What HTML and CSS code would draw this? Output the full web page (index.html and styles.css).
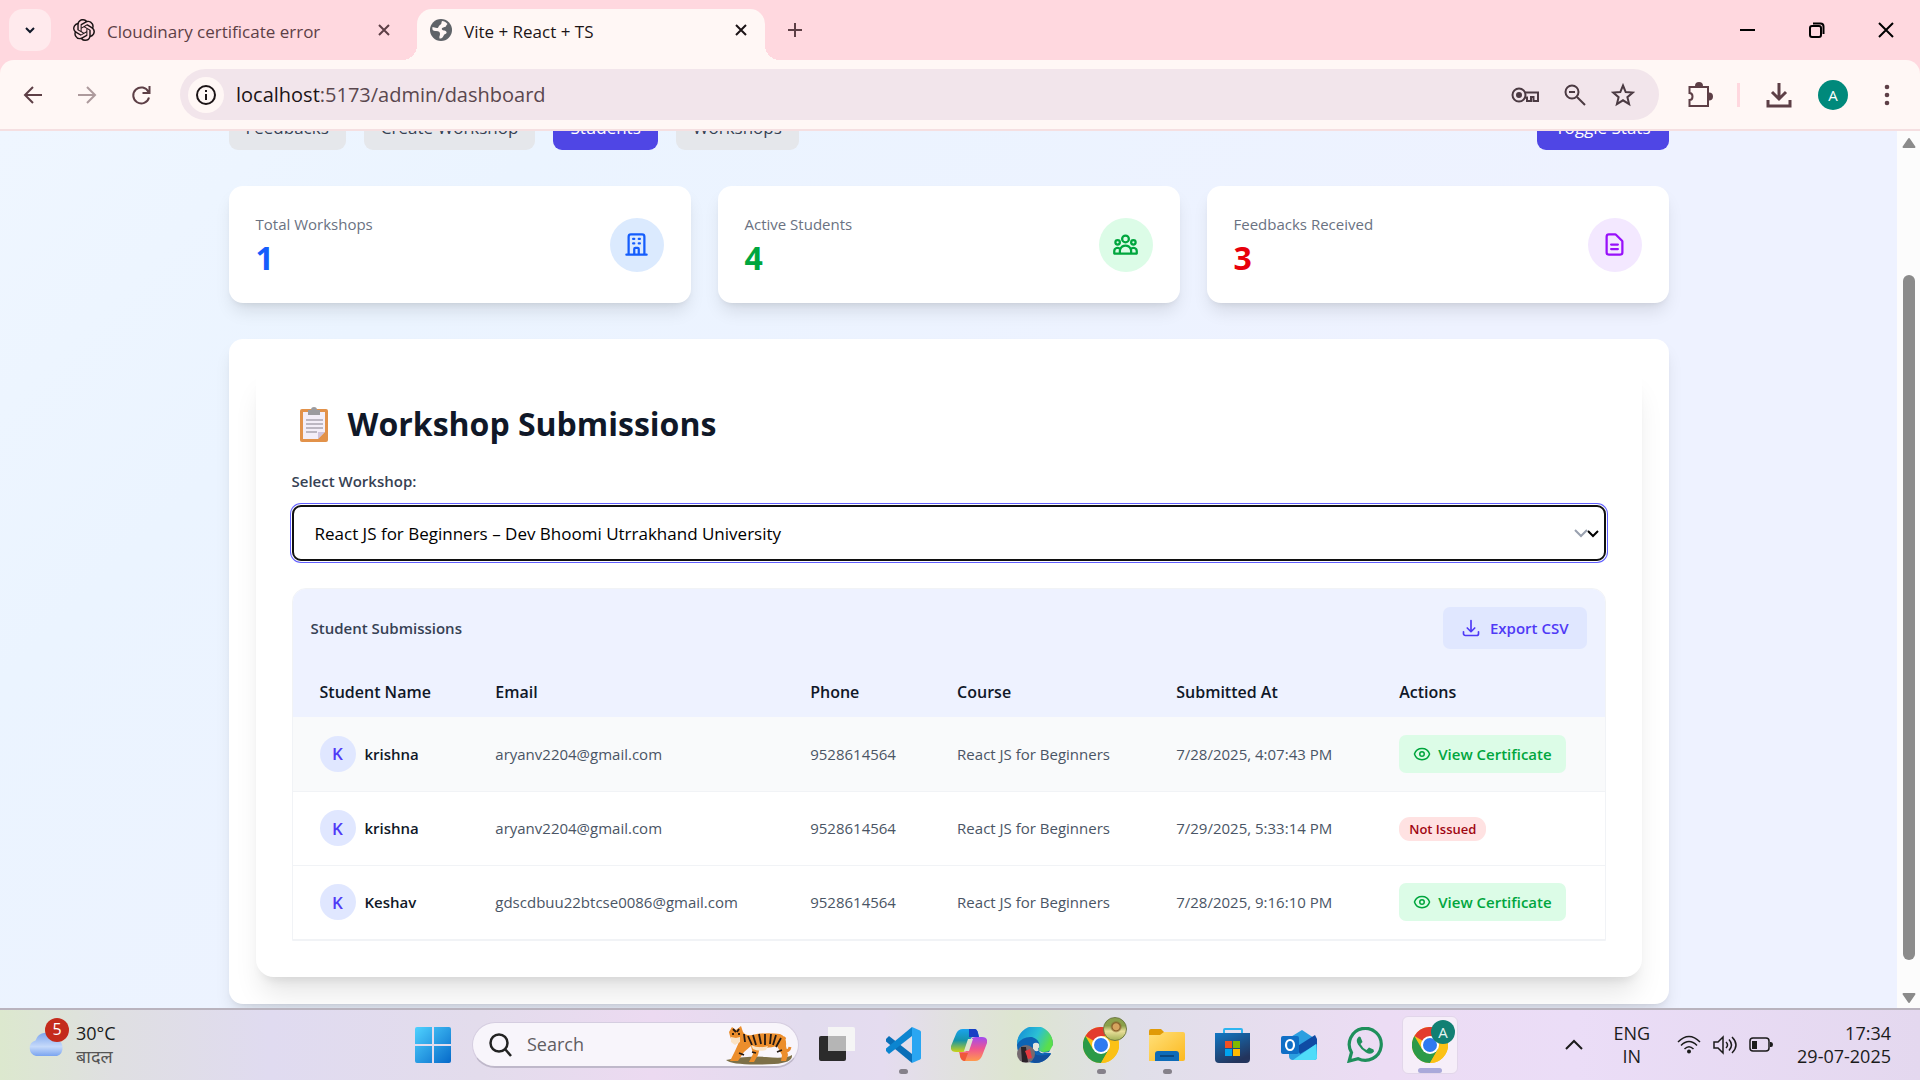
FILE: index.html
```html
<!DOCTYPE html>
<html lang="en">
<head>
<meta charset="utf-8">
<meta name="viewport" content="width=device-width, initial-scale=1">
<title>Vite + React + TS</title>
<link rel="stylesheet" href="styles.css">
</head>
<body>
<svg class="sprite" aria-hidden="true">
  <symbol id="i-eye" viewBox="0 0 24 24"><path d="M2.04 12.32a1 1 0 0 1 0-.64C3.42 7.51 7.36 4.5 12 4.5s8.57 3.01 9.96 7.18c.07.21.07.43 0 .64C20.58 16.49 16.64 19.5 12 19.5s-8.57-3.01-9.96-7.18z"/><circle cx="12" cy="12" r="3"/></symbol>
  <symbol id="i-close" viewBox="0 0 18 18"><path d="M4 4l10 10M14 4L4 14"/></symbol>
  <symbol id="i-chrome" viewBox="0 0 36 36">
    <circle cx="18" cy="18" r="18" fill="#fbc116"/>
    <path d="M18 18L2.400 9A18 18 0 0 1 33.600 9z" fill="#e33b2e"/>
    <path d="M2.400 9A18 18 0 0 0 18 36L25.800 22.500 18 18 10.200 22.500z" fill="#2b9a48"/>
    <path d="M18 9H33.600A18 18 0 0 1 18 36L25.800 22.500z" fill="#fbc116"/>
    <circle cx="18" cy="18" r="9" fill="#fff"/><circle cx="18" cy="18" r="7" fill="#2f7af0"/>
  </symbol>
</svg>

<header class="browser">
  <div class="tabstrip">
    <button class="tab-search" aria-label="Search tabs"><svg width="18" height="18" viewBox="0 0 18 18"><path d="M5 7l4 4 4-4"/></svg></button>
    <div class="tab">
      <svg class="favicon" viewBox="0 0 24 24"><path fill="#1c1416" d="M22.2819 9.8211a5.9847 5.9847 0 0 0-.5157-4.9108 6.0462 6.0462 0 0 0-6.5098-2.9A6.0651 6.0651 0 0 0 4.9807 4.1818a5.9847 5.9847 0 0 0-3.9977 2.9 6.0462 6.0462 0 0 0 .7427 7.0966 5.98 5.98 0 0 0 .511 4.9107 6.051 6.051 0 0 0 6.5146 2.9001A5.9847 5.9847 0 0 0 13.2599 24a6.0557 6.0557 0 0 0 5.7718-4.2058 5.9894 5.9894 0 0 0 3.9977-2.9001 6.0557 6.0557 0 0 0-.7475-7.0729zm-9.022 12.6081a4.4755 4.4755 0 0 1-2.8764-1.0408l.1419-.0804 4.7783-2.7582a.7948.7948 0 0 0 .3927-.6813v-6.7369l2.02 1.1686a.071.071 0 0 1 .038.052v5.5826a4.504 4.504 0 0 1-4.4945 4.4944zm-9.6607-4.1254a4.4708 4.4708 0 0 1-.5346-3.0137l.142.0852 4.783 2.7582a.7712.7712 0 0 0 .7806 0l5.8428-3.3685v2.3324a.0804.0804 0 0 1-.0332.0615L9.74 19.9502a4.4992 4.4992 0 0 1-6.1408-1.6464zM2.3408 7.8956a4.485 4.485 0 0 1 2.3655-1.9728V11.6a.7664.7664 0 0 0 .3879.6765l5.8144 3.3543-2.0201 1.1685a.0757.0757 0 0 1-.071 0l-4.8303-2.7865A4.504 4.504 0 0 1 2.3408 7.872zm16.5963 3.8558L13.1038 8.364 15.1192 7.2a.0757.0757 0 0 1 .071 0l4.8303 2.7913a4.4944 4.4944 0 0 1-.6765 8.1042v-5.6772a.79.79 0 0 0-.407-.667zm2.0107-3.0231l-.142-.0852-4.7735-2.7818a.7759.7759 0 0 0-.7854 0L9.409 9.2297V6.8974a.0662.0662 0 0 1 .0284-.0615l4.8303-2.7866a4.4992 4.4992 0 0 1 6.6802 4.66zM8.3065 12.863l-2.02-1.1638a.0804.0804 0 0 1-.038-.0567V6.0742a4.4992 4.4992 0 0 1 7.3757-3.4537l-.142.0805L8.704 5.459a.7948.7948 0 0 0-.3927.6813zm1.0976-2.3654l2.602-1.4998 2.6069 1.4998v2.9994l-2.5974 1.4997-2.6067-1.4997Z"/></svg>
      <span class="tab-title">Cloudinary certificate error</span>
      <button class="tab-close" aria-label="Close tab"><svg width="18" height="18"><use href="#i-close"/></svg></button>
    </div>
    <div class="tab tab-active">
      <svg class="favicon" viewBox="0 0 22 22"><circle cx="11" cy="11" r="11" fill="#5f6368"/><path d="M12 2c-1 2 0 3-2 4s-1 3-3 3-3-1-4.500-1C2 11 3 12 6 12s4 1 4 3-1 2-.500 4.500C12 20 13 18 14 16c1-1.500 3-1 2.500-3S13 12 12 10.500 14 8 15 8s1-2 2.500-3C16 3 14 2 12 2z" fill="#fff7f5"/></svg>
      <span class="tab-title">Vite + React + TS</span>
      <button class="tab-close" aria-label="Close tab"><svg width="18" height="18"><use href="#i-close"/></svg></button>
    </div>
    <button class="new-tab" aria-label="New tab"><svg width="20" height="20" viewBox="0 0 20 20"><path d="M10 3v14M3 10h14"/></svg></button>
    <div class="window-controls">
      <button aria-label="Minimize"><svg width="16" height="16" viewBox="0 0 16 16"><path d="M0 8h15"/></svg></button>
      <button aria-label="Restore"><svg width="16" height="16" viewBox="0 0 16 16"><rect x="1" y="4" width="11" height="11" rx="2"/><path d="M4 1.500h7.500a3 3 0 0 1 3 3V12"/></svg></button>
      <button aria-label="Close"><svg width="16" height="16" viewBox="0 0 16 16"><path d="M1 1l14 14M15 1L1 15"/></svg></button>
    </div>
  </div>
  <div class="toolbar">
    <button class="tool" aria-label="Back"><svg width="24" height="24" viewBox="0 0 24 24"><path d="M21 12H4M12 4l-8 8 8 8"/></svg></button>
    <button class="tool tool-off" aria-label="Forward"><svg width="24" height="24" viewBox="0 0 24 24"><path d="M3 12h17M12 4l8 8-8 8"/></svg></button>
    <button class="tool" aria-label="Reload"><svg width="24" height="24" viewBox="0 0 24 24"><path d="M20 14.500A8 8 0 1 1 19.500 9M20.500 3v7h-7"/></svg></button>
    <div class="omnibox">
      <button class="site-info" aria-label="Site information"><svg width="24" height="24" viewBox="0 0 24 24"><circle cx="12" cy="12" r="9"/><path d="M12 11v6M12 7v2"/></svg></button>
      <div class="url">localhost<span>:5173/admin/dashboard</span></div>
      <button aria-label="Passwords"><svg width="28" height="24" viewBox="0 0 28 24"><circle cx="8" cy="12" r="6.500"/><circle cx="8" cy="12" r="2" fill="#4b3a42"/><path d="M14 9.500H27V18h-4.500v-4H20v4h-4v-3.500h-2"/></svg></button>
      <button aria-label="Zoom"><svg width="24" height="24" viewBox="0 0 24 24"><circle cx="9" cy="9" r="6.500"/><path d="M6 9h6M14 14l8 8"/></svg></button>
      <button aria-label="Bookmark"><svg width="24" height="24" viewBox="0 0 24 24"><path d="M12 2.500l2.700 6.600 7.100.500-5.400 4.600 1.700 6.900-6.100-3.800-6.100 3.800 1.700-6.900L2.200 9.600l7.100-.500z"/></svg></button>
    </div>
    <button class="tool" aria-label="Extensions"><svg width="26" height="26" viewBox="0 0 26 26"><path d="M2.500 5h18.500v19H2.500v-6c4 0 4-7 0-7z"/><path d="M9 4a3 3 0 0 1 6 0zM22 11.500a3 3 0 0 1 0 6z" fill="#5d3f46"/></svg></button>
    <i class="tool-divider"></i>
    <button class="tool tool-bold" aria-label="Downloads"><svg width="26" height="26" viewBox="0 0 26 26"><path d="M13 1v15M6 10l7 7 7-7M2 18v6h22v-6"/></svg></button>
    <button class="tool" aria-label="Profile"><span class="profile">A</span></button>
    <button class="tool" aria-label="Menu"><svg width="24" height="24" viewBox="0 0 24 24" class="dots"><circle cx="12" cy="4" r="2.300"/><circle cx="12" cy="12" r="2.300"/><circle cx="12" cy="20" r="2.300"/></svg></button>
  </div>
</header>

<div class="viewport">
  <main class="page">
    <div class="content">
      <nav class="actions">
        <button class="pill">Feedbacks</button>
        <button class="pill">Create Workshop</button>
        <button class="pill pill-on">Students</button>
        <button class="pill">Workshops</button>
        <button class="pill pill-on pill-end">Toggle Stats</button>
      </nav>
      <section class="stats">
        <article class="stat stat-blue">
          <div><p class="stat-label">Total Workshops</p><p class="stat-value">1</p></div>
          <span class="stat-icon"><svg viewBox="0 0 24 24"><path d="M19 21V5a2 2 0 00-2-2H7a2 2 0 00-2 2v16m14 0h2m-2 0h-5m-9 0H3m2 0h5M9 7h1m-1 4h1m4-4h1m-1 4h1m-5 10v-5a1 1 0 011-1h2a1 1 0 011 1v5m-4 0h4"/></svg></span>
        </article>
        <article class="stat stat-green">
          <div><p class="stat-label">Active Students</p><p class="stat-value">4</p></div>
          <span class="stat-icon"><svg viewBox="0 0 24 24"><path d="M17 20h5v-2a3 3 0 00-5.356-1.857M17 20H7m10 0v-2c0-.656-.126-1.283-.356-1.857M7 20H2v-2a3 3 0 015.356-1.857M7 20v-2c0-.656.126-1.283.356-1.857m0 0a5.002 5.002 0 019.288 0M15 7a3 3 0 11-6 0 3 3 0 016 0zm6 3a2 2 0 11-4 0 2 2 0 014 0zM7 10a2 2 0 11-4 0 2 2 0 014 0z"/></svg></span>
        </article>
        <article class="stat stat-red">
          <div><p class="stat-label">Feedbacks Received</p><p class="stat-value">3</p></div>
          <span class="stat-icon"><svg viewBox="0 0 24 24"><path d="M9 12h6m-6 4h6m2 5H7a2 2 0 01-2-2V5a2 2 0 012-2h5.586a1 1 0 01.707.293l5.414 5.414a1 1 0 01.293.707V19a2 2 0 01-2 2z"/></svg></span>
        </article>
      </section>
      <section class="panel">
        <div class="sheet">
          <h1>
            <svg class="clipboard" viewBox="0 0 28 36"><rect y="3" width="28" height="33" rx="2" fill="#e2924a"/><path d="M3 6h22v20l-7 7H3z" fill="#f3eef8"/><path d="M25 26v7h-7z" fill="#e2924a"/><path d="M18 26h7l-7 7z" fill="#cfc4dc"/><path d="M8 4h3a3 3 0 0 1 6 0h3v5H8z" fill="#9b9b9f"/><path d="M6 14h17M6 18h17M6 22h17M6 26h11" stroke="#aaa5b0" stroke-width="1.500"/></svg>
            Workshop Submissions
          </h1>
          <label class="field-label" for="workshop">Select Workshop:</label>
          <div class="select-wrap">
            <select id="workshop"><option>React JS for Beginners – Dev Bhoomi Utrrakhand University</option></select>
            <svg class="select-arrows" width="26" height="12" viewBox="0 0 26 12"><path d="M1 3l6 6 6-6" stroke="#99a1af"/><path d="M14 4l5 5 5-5" stroke="#000"/></svg>
          </div>
          <div class="submissions">
            <div class="submissions-head">
              <h2>Student Submissions</h2>
              <button class="export"><svg viewBox="0 0 24 24"><path d="M3 16.500v2.250A2.250 2.250 0 0 0 5.250 21h13.500A2.250 2.250 0 0 0 21 18.750V16.500M16.500 12L12 16.500 7.500 12M12 16.500V3"/></svg>Export CSV</button>
            </div>
            <table>
              <colgroup><col class="c-name"><col class="c-email"><col class="c-phone"><col class="c-course"><col class="c-date"><col></colgroup>
              <thead><tr><th>Student Name</th><th>Email</th><th>Phone</th><th>Course</th><th>Submitted At</th><th>Actions</th></tr></thead>
              <tbody>
                <tr class="row-hover">
                  <td><div class="student"><span class="avatar">K</span>krishna</div></td><td>aryanv2204@gmail.com</td><td>9528614564</td><td>React JS for Beginners</td><td>7/28/2025, 4:07:43 PM</td>
                  <td><button class="view"><svg viewBox="0 0 24 24"><use href="#i-eye"/></svg>View Certificate</button></td>
                </tr>
                <tr>
                  <td><div class="student"><span class="avatar">K</span>krishna</div></td><td>aryanv2204@gmail.com</td><td>9528614564</td><td>React JS for Beginners</td><td>7/29/2025, 5:33:14 PM</td>
                  <td><span class="badge">Not Issued</span></td>
                </tr>
                <tr>
                  <td><div class="student"><span class="avatar">K</span>Keshav</div></td><td>gdscdbuu22btcse0086@gmail.com</td><td>9528614564</td><td>React JS for Beginners</td><td>7/28/2025, 9:16:10 PM</td>
                  <td><button class="view"><svg viewBox="0 0 24 24"><use href="#i-eye"/></svg>View Certificate</button></td>
                </tr>
              </tbody>
            </table>
          </div>
        </div>
      </section>
    </div>
  </main>
  <div class="scrollbar">
    <svg width="16" height="12" viewBox="0 0 16 12"><path d="M8 2l5.500 8h-11z"/></svg>
    <i class="thumb"></i>
    <svg width="16" height="12" viewBox="0 0 16 12"><path d="M8 10l5.500-8h-11z"/></svg>
  </div>
</div>

<footer class="taskbar">
  <div class="weather">
    <div class="cloud">
      <svg width="38" height="30" viewBox="0 0 38 30"><defs><linearGradient id="cl" x2="0" y2="1"><stop stop-color="#7ea6ee"/><stop offset=".6" stop-color="#c6dafa"/><stop offset="1" stop-color="#7aa4f0"/></linearGradient></defs><path d="M8 28a8 8 0 0 1-.500-15.500A11 11 0 0 1 28 11a9 9 0 0 1 1 17z" fill="url(#cl)"/></svg>
      <span class="count">5</span>
    </div>
    <div class="weather-text"><span>30°C</span><span class="muted" lang="hi">बादल</span></div>
  </div>
  <div class="apps">
    <button class="app" aria-label="Start"><svg viewBox="0 0 36 36"><defs><linearGradient id="win" x2="1" y2="1"><stop stop-color="#4fd2ff"/><stop offset="1" stop-color="#0669c9"/></linearGradient></defs><path d="M2 0h15v17H0V2a2 2 0 0 1 2-2zM19 0h15a2 2 0 0 1 2 2v15H19zM0 19h17v17H2a2 2 0 0 1-2-2zM19 19h17v15a2 2 0 0 1-2 2H19z" fill="url(#win)"/></svg></button>
    <div class="search">
      <svg width="24" height="24" viewBox="0 0 24 24"><circle cx="10" cy="10" r="8.500"/><path d="M16 16l6 7"/></svg>
      <input type="text" placeholder="Search" aria-label="Search">
      <svg class="tiger" width="68" height="40" viewBox="0 0 68 40">
        <path d="M1 35q20-5 40-3t26-2q1 8-18 9Q8 41 1 35z" fill="#7d7048"/>
        <path d="M60 12q-4 5 0 13 4 2 5-3" fill="none" stroke="#e8872a" stroke-width="3"/>
        <path d="M4 7l3-5 4 3 5-4 2 6q3 4 9 3 14-3 28-1 7 3 6 12l2 9-2 6h-5l1-6-5-9q-9 3-17 1l-2 8-4 7h-5l4-8-2-8-7 6-6 9H5l5-10 4-9q-8 0-9-6z" fill="#ec8e2c"/>
        <path d="M6 12l5 1 4-1v5l-5 3-4-3zM26 20q8 4 17 1l-2 4q-8 2-13-1z" fill="#fbe3c4"/>
        <path d="M23 11l4 9M28 10l3 10M34 9l2 10M40 9v11M46 9l-1 10M51 10l-3 10M56 13l-5 9M8 4l3 3M14 4l-2 3M19 9l1 8M14 28l5 2M52 27l5-2M27 27l4 1" stroke="#241a16" stroke-width="1.800"/>
        <circle cx="8" cy="9" r="1"/><circle cx="14" cy="9" r="1"/>
      </svg>
    </div>
    <button class="app" aria-label="Task view"><svg viewBox="0 0 36 36"><rect y="9" width="27" height="25" rx="2" fill="#2b2b2b"/><path d="M9 0h25a2 2 0 0 1 2 2v22H9z" fill="#f5f5f5"/><path d="M9 9h18v15H9z" fill="#b5b5b5"/></svg></button>
    <button class="app running" aria-label="Visual Studio Code"><svg viewBox="0 0 36 36"><path d="M1 12l3-3 23 18v9L1 14.500z" fill="#0a6fb8"/><path d="M1 24l3 3L27 9V0L1 21.500z" fill="#0c85d0"/><path d="M27 0l8 3.500q1 .500 1 1.500v26q0 1-1 1.500L27 36z" fill="#2aa6f2"/></svg></button>
    <button class="app" aria-label="Copilot"><svg viewBox="0 0 36 36"><defs><linearGradient id="cpa" x2="0" y2="1"><stop stop-color="#1aa3ee"/><stop offset=".5" stop-color="#1694a8"/><stop offset="1" stop-color="#cbd317"/></linearGradient><linearGradient id="cpb" x2="0" y2="1"><stop stop-color="#a14bf0"/><stop offset=".5" stop-color="#f0568e"/><stop offset="1" stop-color="#ff9a4d"/></linearGradient></defs><path d="M12 2h11q3 0 4 4l1 4h-6q-2 0-3 3l-3 8q-1 4-5 4H5q-6 0-5-6L5 7q2-5 7-5z" fill="url(#cpa)"/><path d="M18 2h6q2 0 3 4l1 4h-6l-4 0z" fill="#173fc4"/><path d="M24 34H14q-4 0-5-5l-1-4h4q4 0 5-4l3-8q1-3 5-3h6q6 0 5 6l-5 13q-2 5-7 5z" fill="url(#cpb)"/><path d="M9 26h8l-3 8q-4 0-5-5z" fill="#f0583a"/><path d="M17 12h5l-4 12h-5z" fill="#dde5d0"/></svg></button>
    <button class="app" aria-label="Edge"><svg viewBox="0 0 36 36"><defs><linearGradient id="ed" x2="1" y2=".4"><stop stop-color="#1187d8"/><stop offset=".6" stop-color="#2bc0d4"/><stop offset="1" stop-color="#5ade4c"/></linearGradient></defs><circle cx="18" cy="18" r="18" fill="#0d63b4"/><path d="M0 17A18 18 0 0 1 36 17q0 8-9 8-6 0-5-4 2-8-7-11Q6 9 0 17z" fill="url(#ed)"/><path d="M14 20q0 12 20 7-6 9-16 9-8-2-4-16z" fill="#134f9c"/><path d="M16 17a4 4 0 0 1 6 0q1 3-1 5 2 4 11 4h4v-8l-4 7q-10 3-10-2-3 3-6-1z" fill="#e4e4dc"/><circle cx="9" cy="27" r="9" fill="#756a70"/><path d="M4 20h5l2 15H5z" fill="#2b2228"/><path d="M8 24l5-2 2 9-4 1z" fill="#e5393f"/></svg></button>
    <button class="app running" aria-label="Chrome"><svg viewBox="0 0 36 36"><use href="#i-chrome"/></svg><span class="app-badge lion"></span></button>
    <button class="app running" aria-label="File Explorer"><svg viewBox="0 0 36 36"><defs><linearGradient id="fo" x2="1" y2="1"><stop stop-color="#ffe07a"/><stop offset="1" stop-color="#fcb91f"/></linearGradient></defs><path d="M0 4q0-2 2-2h10l4 4-3 4H0z" fill="#e09b08"/><path d="M0 8h11l4-3h19q2 0 2 2v25q0 2-2 2H0z" fill="url(#fo)"/><path d="M6 34V27q0-3 3-3h18q3 0 3 3v7z" fill="#0e6bb8"/><path d="M11 29h14" stroke="#0a4880" stroke-width="2"/></svg></button>
    <button class="app" aria-label="Microsoft Store"><svg viewBox="0 0 36 36"><defs><linearGradient id="st" x2=".5" y2="1"><stop stop-color="#1177c4"/><stop offset="1" stop-color="#23345c"/></linearGradient></defs><path d="M9 8V3q0-1 1-1h16q1 0 1 1v5" fill="none" stroke="#2eb5f0" stroke-width="2"/><path d="M0 6h35v26q0 4-4 4H4q-4 0-4-4z" fill="url(#st)"/><path d="M10 14h7v7h-7z" fill="#f25022"/><path d="M18 14h7v7h-7z" fill="#7fba00"/><path d="M10 22h7v7h-7z" fill="#00a4ef"/><path d="M18 22h7v7h-7z" fill="#ffb900"/></svg></button>
    <button class="app" aria-label="Outlook"><svg viewBox="0 0 36 36"><path d="M8 11l13-8 15 10v17q0 3-3 3H12q-4 0-4-4z" fill="#2c9fe0"/><path d="M15 20l19-12 2 4v5L19 27z" fill="#0f4ba4"/><path d="M12 33l23-16 1 13q0 3-3 3z" fill="#4fdcf9"/><rect y="9" width="18" height="18" rx="2" fill="#106fc6"/><ellipse cx="9" cy="18" rx="4" ry="5" fill="none" stroke="#fff" stroke-width="2.200"/></svg></button>
    <button class="app" aria-label="WhatsApp"><svg viewBox="0 0 36 36" fill="none" stroke="#1e8f5b" stroke-width="3.200"><path d="M2.200 34l2.300-8.500A16 16 0 1 1 11 31.600z"/><path d="M12 9.500q-4 3-1 8t8 8q5 3 8-1l-.500-2-4.500-2-2.500 2.500q-4-2-6-6l2-2-2-5z" fill="#1e8f5b" stroke="none"/></svg></button>
    <button class="app app-active" aria-label="Chrome, profile A"><svg viewBox="0 0 36 36"><use href="#i-chrome"/></svg><span class="app-badge">A</span></button>
  </div>
  <div class="tray">
    <svg width="18" height="12" viewBox="0 0 18 12"><path d="M1 10l8-8 8 8" stroke-width="2"/></svg>
    <div class="lang"><span>ENG</span><span>IN</span></div>
    <div class="status">
      <svg width="24" height="20" viewBox="0 0 24 20"><path d="M1 7q11-11 22 0M4 10.500q8-8 16 0M7.500 14q4.500-4.500 9 0"/><circle cx="12" cy="16.500" r="2" fill="#1b1b1b" stroke="none"/></svg>
      <svg width="24" height="20" viewBox="0 0 24 20"><path d="M1 7h4l5-5v16l-5-5H1zM13 7q3 3 0 6M16 4.500q5 5.500 0 11M19 2q8 8 0 16"/></svg>
      <svg width="24" height="20" viewBox="0 0 24 20"><rect x="1" y="3" width="19" height="13" rx="3"/><path d="M3 6h5v8H3zM21 7h1q2 0 2 2.500T22 12h-1z" fill="#1b1b1b" stroke="none"/></svg>
    </div>
    <div class="clock"><span>17:34</span><span>29-07-2025</span></div>
  </div>
</footer>
</body>
</html>
```
FILE: styles.css
```css
* { box-sizing: border-box; }
body {
  margin: 0;
  height: 100vh;
  display: grid;
  grid-template-rows: auto minmax(0, 1fr) auto;
  overflow: hidden;
  font-family: "Open Sans", "Noto Sans", sans-serif;
  font-size: 15px;
  color: #101828;
}
h1, h2, p { margin: 0; }
button { border: 0; padding: 0; background: none; font: inherit; color: inherit; }
svg { display: block; flex: none; }
.sprite { position: absolute; width: 0; height: 0; }

/* Browser frame */
.browser { background: #ffd8df; }
.tabstrip { display: flex; align-items: center; height: 60px; padding-left: 9px; font-size: 17px; }
.tabstrip button svg { fill: none; stroke: currentColor; stroke-width: 2; }
.favicon { width: 22px; height: 22px; }
.tab-search { display: grid; place-items: center; width: 42px; height: 42px; border-radius: 14px; background: #ffeaed; }
.tab { display: flex; align-items: center; gap: 12px; width: 342px; padding: 0 0 0 22px; color: #5d3f46; }
.tab-title { flex: 1; padding-top: 2px; white-space: nowrap; }
.tab-close { width: 18px; height: 18px; }
.tab-active {
  position: relative;
  align-self: flex-end;
  width: 348px;
  height: 51px;
  margin-left: 24px;
  padding: 0 15px 9px 13px;
  border-radius: 15px 15px 0 0;
  background: #fff7f5;
  color: #1c1416;
}
.tab-active::before, .tab-active::after { content: ""; position: absolute; bottom: 0; width: 15px; height: 15px; }
.tab-active::before { right: 100%; background: radial-gradient(circle at 0 0, transparent 15px, #fff7f5 15px); }
.tab-active::after { left: 100%; background: radial-gradient(circle at 100% 0, transparent 15px, #fff7f5 15px); }
.new-tab { margin-left: 20px; color: #5d3f46; }
.window-controls { display: flex; margin-left: auto; color: #000; }
.window-controls button { display: grid; place-items: center; width: 69px; height: 60px; }

.toolbar {
  display: flex;
  align-items: center;
  height: 71px;
  padding: 0 6px;
  border-bottom: 2px solid #f5dfe1;
  border-radius: 14px 14px 0 0;
  background: #fff7f5;
  color: #5d3f46;
}
.toolbar svg { fill: none; stroke: currentColor; stroke-width: 2; }
.tool { display: grid; place-items: center; width: 54px; height: 54px; }
.tool-off { opacity: .5; }
.toolbar .tool-bold svg { stroke-width: 3; }
.toolbar .dots { fill: currentColor; stroke: none; }
.tool-divider { width: 3px; height: 24px; margin: 0 12px 0 10px; background: #ffd8df; }
.omnibox {
  flex: 1;
  display: flex;
  align-items: center;
  gap: 24px;
  height: 51px;
  margin: 0 14px 0 12px;
  padding: 0 24px 0 8px;
  border-radius: 26px;
  background: #f2e5eb;
  color: #4b3a42;
}
.site-info { display: grid; place-items: center; width: 36px; height: 36px; border-radius: 50%; background: #fff7f5; color: #1c1416; }
.url { flex: 1; margin-left: -12px; font-size: 20px; color: #1c1416; }
.url span { color: #5a474e; }
.profile { display: grid; place-items: center; width: 30px; height: 30px; border-radius: 50%; background: #00897b; color: #fff; font-size: 15px; }

/* Page */
.viewport { display: flex; min-height: 0; overflow: hidden; }
.page { flex: 1; overflow: hidden; padding: 0 27px; background: linear-gradient(135deg, #eff6ff, #ebf4ff 20%, #eef2ff 60%); }
.content { max-width: 1440px; margin: -26px auto 0; }
.actions { display: flex; gap: 18px; margin-bottom: 36px; }
.pill { height: 45px; padding: 0 17px; border-radius: 9px; background: #e5e7eb; color: #364153; font-size: 17px; }
.pill-on { background: #4f46e5; color: #fff; font-weight: 500; }
.pill-end { margin-left: auto; padding: 0 18px; font-weight: 400; }
.stats { display: grid; grid-template-columns: repeat(3, 1fr); gap: 27px; margin-bottom: 36px; }
.stat, .panel { border-radius: 14px; background: #fff; box-shadow: 0 11px 17px -3px rgba(0, 0, 0, .1), 0 4px 7px -4px rgba(0, 0, 0, .1); }
.stat { display: flex; align-items: center; justify-content: space-between; padding: 27px; }
.stat-label { line-height: 23px; color: #6a7282; }
.stat-value { padding-top: 4px; font-size: 32px; line-height: 36px; font-weight: 700; }
.stat-icon { display: grid; place-items: center; width: 54px; height: 54px; border-radius: 50%; }
.stat-icon svg { width: 27px; height: 27px; fill: none; stroke: currentColor; stroke-width: 2; stroke-linecap: round; stroke-linejoin: round; }
.stat-blue { color: #155dfc; }
.stat-green { color: #00a63e; }
.stat-red { color: #e7000b; }
.stat-blue .stat-icon { background: #dbeafe; }
.stat-green .stat-icon { background: #dcfce7; }
.stat-red .stat-icon { background: #f3e8ff; color: #9810fa; }

.panel { padding: 27px; }
.sheet { padding: 36px; border-radius: 18px; box-shadow: 0 22px 28px -6px rgba(0, 0, 0, .1), 0 9px 11px -7px rgba(0, 0, 0, .1); }
h1 { display: flex; align-items: center; gap: 20px; margin-bottom: 25px; padding-left: 8px; font-size: 32px; line-height: 43px; font-weight: 700; }
.clipboard { width: 28px; height: 36px; }
.field-label { display: block; margin-bottom: 13px; line-height: 22px; font-weight: 600; color: #364153; }
.select-wrap { position: relative; margin-bottom: 27px; }
select {
  display: block;
  width: 100%;
  height: 56px;
  padding: 0 21px;
  appearance: none;
  border: 2px solid #101010;
  border-radius: 9px;
  background: #fff;
  box-shadow: 0 0 0 1px #fff, 0 0 0 2px #615fff;
  color: #000;
  font: inherit;
  font-size: 17px;
}
.select-arrows { position: absolute; right: 6px; top: 22px; fill: none; stroke-width: 2; pointer-events: none; }
.submissions { overflow: hidden; border: 1px solid #f1f3f6; border-radius: 14px 14px 0 0; }
.submissions-head { display: flex; align-items: center; justify-content: space-between; padding: 18px; background: #eef2ff; }
h2 { font-size: 15px; font-weight: 600; color: #364153; }
.export, .view { display: inline-flex; align-items: center; font-weight: 600; }
.export svg, .view svg { fill: none; stroke: currentColor; stroke-width: 2; stroke-linecap: round; stroke-linejoin: round; }
.export { gap: 9px; height: 42px; padding: 0 18px; border-radius: 7px; background: #e0e7ff; color: #4f39f6; }
.export svg { width: 20px; height: 20px; }
table { width: 100%; table-layout: fixed; border-collapse: collapse; white-space: nowrap; }
.c-name { width: 13.4%; }
.c-email { width: 24%; }
.c-phone { width: 11.2%; }
.c-course { width: 16.7%; }
.c-date { width: 17%; }
th, td { padding: 0 0 0 27px; text-align: left; }
th { height: 50px; background: #eef2ff; font-size: 16px; font-weight: 600; }
td { height: 74px; border-bottom: 1px solid #f1f3f6; color: #4a5565; }
.row-hover { background: #f9fafb; }
.student { display: flex; align-items: center; gap: 9px; font-weight: 600; color: #101828; }
.avatar { display: grid; place-items: center; width: 36px; height: 36px; border-radius: 50%; background: #e0e7ff; color: #4f39f6; font-size: 17px; }
.view { gap: 7px; height: 38px; padding: 0 14px; border-radius: 7px; background: #dcfce7; color: #00a63e; }
.view svg { width: 18px; height: 18px; }
.badge { padding: 3px 10px; border-radius: 11px; background: #ffe2e2; color: #9f0712; font-size: 13px; line-height: 16px; font-weight: 600; }

.scrollbar { display: flex; flex-direction: column; align-items: center; width: 23px; padding: 6px 0 4px; background: #fcfcfc; }
.scrollbar svg { fill: #8b8b8b; stroke: #8b8b8b; stroke-width: 2; stroke-linejoin: round; }
.scrollbar svg:last-child { margin-top: auto; }
.thumb { flex: 0 0 79%; width: 12px; margin-top: 126px; border-radius: 6px; background: #8b8b8b; }

/* Taskbar */
.taskbar {
  display: grid;
  grid-template-columns: 400px auto 1fr;
  align-items: center;
  height: 72px;
  border-top: 2px solid #b9b3be;
  background: linear-gradient(90deg, #dce8ce 0, #dfdfe2 6%, #e0dbf0 14%, #e3dcec 25%, #ecdaf1 34%, #e2dcee 42%, #e5dcf0 46%, #dde5d0 53%, #e0dfe9 59%, #ecdcf4 72%, #ebddf7 82%, #e4d8ef 100%);
  color: #1b1b1b;
  font-size: 18px;
  line-height: 23px;
}
.weather { display: flex; gap: 10px; padding-left: 28px; }
.cloud { position: relative; padding-top: 6px; }
.count { position: absolute; left: 17px; top: -4px; width: 24px; height: 24px; border-radius: 50%; background: #c42b1c; color: #fff; text-align: center; font-size: 16px; }
.weather-text { display: grid; }
.muted { color: #555; }
.apps { display: flex; align-items: center; }
.app { position: relative; display: grid; place-items: center; width: 66px; height: 62px; }
.app > svg { width: 36px; height: 36px; }
.running::after, .app-active::after { content: ""; position: absolute; bottom: 2px; left: 50%; width: 9px; height: 5px; margin-left: -4px; border-radius: 3px; background: #85818a; }
.app-active { width: 56px; height: 58px; margin-left: 4px; border: 1px solid #e2d6ea; border-radius: 6px; background: #f6eef9; }
.app-active::after { bottom: 0; width: 24px; margin-left: -12px; background: #aaa9da; }
.app-badge { position: absolute; right: 2px; top: 3px; display: grid; place-items: center; width: 24px; height: 24px; border-radius: 50%; background: #128073; color: #e5f4f2; font-size: 15px; }
.lion { right: 7px; background: radial-gradient(circle at 55% 40%, #d5a45e 0 3px, #8a5f2a 4px, transparent 6px), linear-gradient(#8aa04a 35%, #eadf9a 60%, #a5b45a); border: 1px solid #6f7a44; }
.search { display: flex; align-items: center; gap: 14px; width: 327px; height: 46px; margin: 0 5px 0 6px; padding: 0 5px 0 16px; border: 1px solid #d5cde0; border-bottom: 2px solid #bfb8ca; border-radius: 23px; background: #f8f5fb; }
.search > svg:first-child { fill: none; stroke: #222; stroke-width: 2.5px; }
.search input { flex: 1; min-width: 0; border: 0; padding: 0; background: none; font: inherit; }
.search input::placeholder { color: #5f5d62; opacity: 1; }
.tray { display: flex; align-items: center; justify-content: flex-end; padding-right: 29px; }
.tray svg { fill: none; stroke: #1b1b1b; stroke-width: 1.5px; }
.lang { display: grid; justify-items: center; margin: 0 27px 0 30px; }
.status { display: flex; gap: 12px; }
.clock { display: grid; justify-items: end; margin-left: 24px; }
```
